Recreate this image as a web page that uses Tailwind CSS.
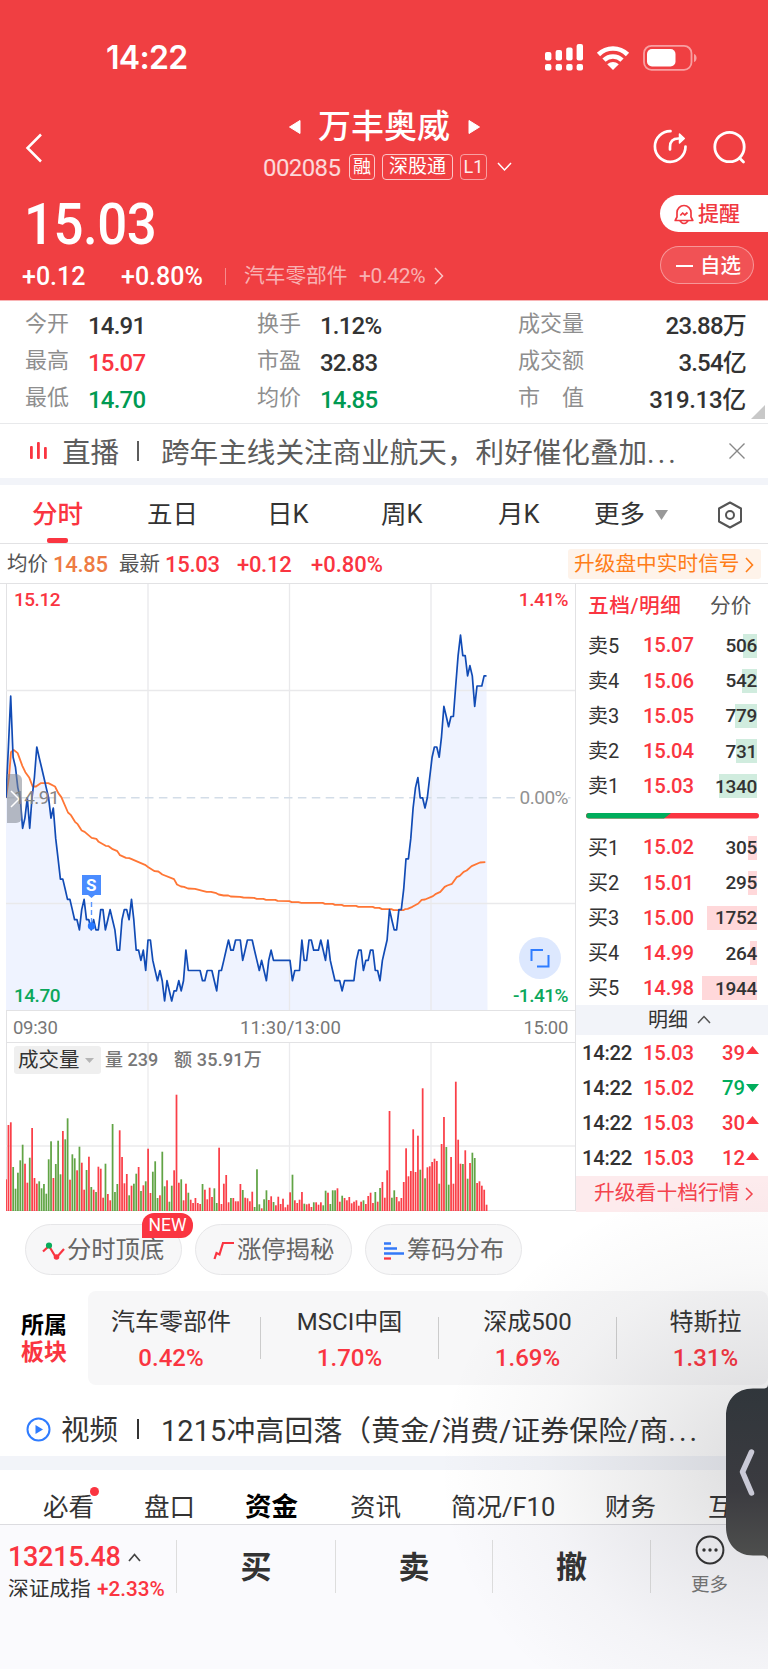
<!DOCTYPE html>
<html lang="zh-CN">
  <head>
    <meta charset="UTF-8" />
    <meta name="viewport" content="width=device-width, initial-scale=1.0" />
    <title>万丰奥威 002085</title>
    <script src="https://cdn.jsdelivr.net/npm/@tailwindcss/browser@4"></script>
  </head>
  <body
    class="relative h-[1669px] w-[768px] overflow-hidden bg-white font-['Roboto','Noto_Sans_CJK_SC',sans-serif] leading-none whitespace-nowrap text-[#333]"
  >
    <!-- header -->
    <header class="h-[301px] border-b border-[#f9b4b5] bg-[#f03f42] text-white">
      <!-- status bar -->
      <div class="flex h-[102px] items-center pt-[13px] pr-[70px] pl-[106px]">
        <span class="font-['Inter'] text-[32px] font-semibold tracking-[-0.700px]">14:22</span>
        <svg class="ml-auto" width="153" height="28" viewBox="545 43 153 28" fill="none">
          <g fill="#fff">
            <rect x="545" y="51" width="6.4" height="8.5" rx="2" />
            <rect x="555.6" y="49" width="6.4" height="10.5" rx="2" />
            <rect x="566.2" y="46.5" width="6.4" height="13" rx="2" />
            <rect x="576.6" y="43" width="6.4" height="16.5" rx="2" />
            <rect x="545" y="63" width="6.4" height="6.6" rx="2" />
            <rect x="555.6" y="63" width="6.4" height="6.6" rx="2" />
            <rect x="566.2" y="63" width="6.4" height="6.6" rx="2" />
            <rect x="576.6" y="63" width="6.4" height="6.6" rx="2" />
            <path d="M607.2 63.2q5.800-4.600 11.600 0L613 69z" />
            <rect x="647" y="48" width="28.500" height="17.500" rx="5" />
          </g>
          <path d="M598.500 53.500a20.500 20.500 0 0 1 29 0M604 59.200a12.800 12.800 0 0 1 18 0" stroke="#fff" stroke-width="4.600" />
          <rect x="644" y="44.800" width="47.500" height="24" rx="7.500" stroke="#fff" stroke-opacity=".5" stroke-width="1.800" />
          <path d="M694 53c3.400 1 3.400 7 0 8z" fill="#fff" fill-opacity=".5" />
        </svg>
      </div>

      <!-- stock title -->
      <div class="grid h-[84px] grid-cols-[263px_245px_182px_56px]">
        <svg class="mt-[30px] ml-[24px]" width="20" height="32" viewBox="0 0 20 32" fill="none" stroke="#fff" stroke-width="2.500">
          <path d="M17 2.500 3.500 16 17 29.500" />
        </svg>
        <div class="flex flex-col">
          <div class="flex h-[49px] items-center pl-[26px]">
            <svg width="12" height="16" viewBox="0 0 12 16" fill="#fff"><path d="M11 1.500v13L.500 8z" stroke="#fff" stroke-linejoin="round" /></svg>
            <span class="ml-[17px] text-[33px] font-medium">万丰奥威</span>
            <svg class="ml-[18px]" width="12" height="16" viewBox="0 0 12 16" fill="#fff"><path d="M1 1.500v13L11.500 8z" stroke="#fff" stroke-linejoin="round" /></svg>
          </div>
          <div class="flex h-[31px] items-center">
            <span class="w-[86px] shrink-0 pt-[2px] text-[24px] tracking-[-0.600px] text-white/80">002085</span>
            <span class="flex h-[26px] w-[26px] shrink-0 items-center justify-center rounded-[4px] border border-white/70 text-[18px]">融</span>
            <span class="ml-[7px] flex h-[26px] w-[71px] shrink-0 items-center justify-center rounded-[4px] border border-white/70 text-[19px]">深股通</span>
            <span class="ml-[7px] flex h-[26px] w-[27px] shrink-0 items-center justify-center rounded-[4px] border border-white/50 text-[18px] text-white/90">L1</span>
            <svg class="ml-[10px] shrink-0" width="15" height="10" viewBox="0 0 15 10" fill="none" stroke="#fff" stroke-width="1.500"><path d="m1 1 6.500 7L14 1" /></svg>
          </div>
        </div>
        <svg class="mt-[26px] ml-auto" width="38" height="38" viewBox="0 0 38 38" fill="none" stroke="#fff" stroke-width="2.700" stroke-linecap="round">
          <path d="M18.500 3.200A15.300 15.300 0 1 0 33.500 18.500" />
          <path d="M18 21.500v-2.500c0-6 3-8.500 8.500-8.500h4" />
          <path d="m27.500 6 4.800 4.500-4.800 4.500z" fill="#fff" stroke-width="1.500" stroke-linejoin="round" />
        </svg>
        <svg class="mt-[26px] ml-auto" width="38" height="38" viewBox="0 0 38 38" fill="none" stroke="#fff" stroke-width="2.800" stroke-linecap="round">
          <circle cx="21.500" cy="19" r="14.700" /><path d="m31.500 30 4 4" />
        </svg>
      </div>

      <!-- price -->
      <div class="flex justify-between">
        <div>
          <div class="flex h-[74px] items-center pt-[2px] pl-[24px]">
            <span class="origin-left scale-x-[.91] text-[58px] font-medium tracking-[-0.500px]">15.03</span>
          </div>
          <div class="grid h-[32px] grid-cols-[99px_104px_19px_115px_75px_20px] items-center pl-[22px] text-[25px]">
            <span class="font-medium">+0.12</span>
            <span class="font-medium">+0.80%</span>
            <i class="h-[17px] w-px bg-white/40"></i>
            <span class="text-[20.700px] text-white/60">汽车零部件</span>
            <span class="text-[21px] tracking-[-0.300px] text-white/60">+0.42%</span>
            <svg width="10" height="18" viewBox="0 0 10 18" fill="none" stroke="#fff" stroke-opacity=".7" stroke-width="1.500"><path d="m1 1 7.500 8L1 17" /></svg>
          </div>
        </div>
        <div class="flex w-[108px] flex-col gap-[14px] pt-[9px]">
          <button class="flex h-[37px] items-center rounded-l-full bg-white pt-px pl-[14px] text-[21px] font-medium text-[#f0383f]">
            <svg class="mr-[4px]" width="20" height="21" viewBox="0 0 20 21" fill="none" stroke="#f0383f" stroke-width="1.700" stroke-linejoin="round">
              <path d="M3 13V8.500a7 7 0 0 1 14 0V13l1.800 3.500H1.200zM6 17q4 5 8 0M6.300 11.500l2.400-2.500 2 2 2.800-2.500" />
            </svg>
            提醒
          </button>
          <button class="flex h-[38px] w-[94px] items-center rounded-full border border-white/40 bg-white/10 pt-[2px] pl-[15px] text-[20.500px] font-medium">
            <i class="mr-[7px] h-[2px] w-[17px] bg-white"></i>自选
          </button>
        </div>
      </div>
    </header>

    <!-- key figures -->
    <section class="relative grid h-[123px] grid-cols-[63px_169px_63px_198px_90px_138px] grid-rows-[37px_37px_37px] items-center border-b border-[#e8e9eb] pt-[6px] pl-[25px] text-[24px] font-medium tracking-[-0.800px]">
      <span class="-mt-[3px] text-[22px] font-normal tracking-normal text-[#8e8e8e]">今开</span><span>14.91</span>
      <span class="-mt-[3px] text-[22px] font-normal tracking-normal text-[#8e8e8e]">换手</span><span>1.12%</span>
      <span class="-mt-[3px] text-[22px] font-normal tracking-normal text-[#8e8e8e]">成交量</span><span class="text-right">23.88万</span>
      <span class="-mt-[3px] text-[22px] font-normal tracking-normal text-[#8e8e8e]">最高</span><span class="text-[#fa3541]">15.07</span>
      <span class="-mt-[3px] text-[22px] font-normal tracking-normal text-[#8e8e8e]">市盈</span><span>32.83</span>
      <span class="-mt-[3px] text-[22px] font-normal tracking-normal text-[#8e8e8e]">成交额</span><span class="text-right">3.54亿</span>
      <span class="-mt-[3px] text-[22px] font-normal tracking-normal text-[#8e8e8e]">最低</span><span class="text-[#009a52]">14.70</span>
      <span class="-mt-[3px] text-[22px] font-normal tracking-normal text-[#8e8e8e]">均价</span><span class="text-[#009a52]">14.85</span>
      <span class="-mt-[3px] flex w-[66px] justify-between text-[22px] font-normal tracking-normal text-[#8e8e8e]"><b class="font-normal">市</b><b class="font-normal">值</b></span><span class="text-right tracking-[-0.300px]">319.13亿</span>
      <svg class="absolute right-[3px] bottom-[4px]" width="14" height="14" viewBox="0 0 14 14"><path d="M14 0v14H0z" fill="#c8c8c8" /></svg>
    </section>

    <!-- live banner -->
    <section class="grid h-[54px] grid-cols-[33px_75px_24px_567px_20px] items-center pl-[29px] text-[28.600px] text-[#5c5c5c]">
      <svg width="20" height="18" viewBox="0 0 20 18" fill="#fa3541"><rect x="1" y="4" width="2.800" height="13" rx="1" /><rect x="8" y="0" width="2.800" height="17" rx="1" /><rect x="15" y="5" width="2.800" height="12" rx="1" /></svg>
      <span class="pt-[4px]">直播</span>
      <i class="h-[20px] w-[2px] bg-[#5c5c5c]"></i>
      <span class="pt-[4px]">跨年主线关注商业航天，利好催化叠加<b class="font-normal tracking-[3px]">...</b></span>
      <svg width="18" height="18" viewBox="0 0 18 18" stroke="#888" stroke-width="1.400"><path d="m1.500 1.500 15 15m0-15-15 15" /></svg>
    </section>
    <div class="h-[7px] bg-[#f2f4f9]"></div>

    <!-- period tabs -->
    <nav class="relative grid h-[59px] grid-cols-[115px_120px_114px_117px_96px_61px_62px_40px] items-center border-b border-[#e2e2e4] pt-[2px] pl-[32px] text-[25.500px]">
      <span class="font-medium text-[#fa3541]">分时</span>
      <span>五日</span>
      <span>日K</span>
      <span>周K</span>
      <span>月K</span>
      <span>更多</span>
      <svg width="13" height="10" viewBox="0 0 13 10" fill="#999"><path d="M0 0h13L6.500 10z" /></svg>
      <svg width="26" height="28" viewBox="0 0 26 28" fill="none" stroke="#555" stroke-width="2"><path d="M13 1.500 24 7.500v13l-11 6-11-6v-13z" stroke-linejoin="round" /><circle cx="13" cy="14" r="4" /></svg>
      <i class="absolute bottom-0 left-[47px] h-[5px] w-[21px] rounded-[2px] bg-[#fa3541]"></i>
    </nav>

    <!-- quote line -->
    <div class="grid h-[39px] grid-cols-[46px_66px_46px_72px_74px_257px_193px] items-center pt-[2px] pl-[7px] text-[22px] font-medium tracking-[-0.300px] text-[#fa3541]">
      <span class="text-[20.500px] font-normal tracking-normal text-[#555]">均价</span>
      <span class="text-[#ee7b43]">14.85</span>
      <span class="text-[20.500px] font-normal tracking-normal text-[#555]">最新</span>
      <span>15.03</span>
      <span>+0.12</span>
      <span class="tracking-normal">+0.80%</span>
      <button class="-mt-[2px] flex h-[30px] items-center rounded-[3px] bg-[#fef3ea] pt-[2px] pl-[6px] text-[20.700px] font-normal tracking-normal text-[#ff7d18]">
        升级盘中实时信号
        <svg class="ml-[5px] shrink-0" width="9" height="16" viewBox="0 0 9 16" fill="none" stroke="#ff7d18" stroke-width="1.600"><path d="m1 1 6.500 7L1 15" /></svg>
      </button>
    </div>

    <!-- charts and order book -->
    <main class="flex h-[628px] border-t border-[#e2e2e4]">
      <div class="ml-[6px] w-[570px] shrink-0 border-r border-[#e2e2e4]">
        <!-- minute chart -->
        <div class="relative h-[427px] border-b border-l border-[#e2e2e4] text-[19px] font-medium tracking-[-0.500px]">
          <svg class="-ml-px block" width="569" height="426" viewBox="0 0 569 426" fill="none">
            <path id="price-area" fill="#eff3ff" />
            <path d="M142 0v426M283.500 0v426M425 0v426M0 106.500h569M0 319.500h569" stroke="#e9e9eb" stroke-width="1.300" />
            <path d="M0 213.800h569" stroke="#d3dde8" stroke-width="1.500" stroke-dasharray="8.500 5.400" />
            <path d="M18 652 27 590 33 515 41 508 53 518 67 556 76 575 88 592 98 618 108 618 122 608 145 608 165 618 175 638 184 650 204 696 212 703 225 724 233 731 245 750 254 754 275 772 289 775 296 784 317 796 326 797 338 806 352 812 360 824 378 832 388 833 435 853 445 860 464 872 475 873 487 882 522 896 531 912 543 918 552 919 564 924 585 925 608 931 620 934 633 934 649 938 656 942 671 945 685 945 692 948 720 949 730 951 762 952 770 955 790 955 798 958 826 958 833 961 868 962 875 965 895 965 904 967 968 967 975 970 998 970 1005 973 1025 973 1032 976 1068 976 1075 979 1118 979 1125 982 1138 982 1146 986 1174 986 1181 989 1210 989 1215 986 1223 985 1237 979 1255 969 1265 958 1275 957 1299 947 1308 940 1321 934 1334 919 1342 915 1356 910 1370 890 1379 886 1391 874 1400 870 1415 857 1440 846 1456 845" transform="translate(-6 -3.500) scale(.33333)" stroke="#ff7635" stroke-width="5.400" stroke-linejoin="round" />
            <path id="price-line" stroke="#114bb5" stroke-width="1.700" stroke-linejoin="round" />
            <!-- sell marker -->
            <path d="M85.500 318v22" stroke="#5c98ff" stroke-width="1.400" stroke-dasharray="5 3" />
            <path d="M76 291h19v20h-6l-3.500 3-3.500-3h-6z" fill="#4a8cff" />
            <circle cx="85.500" cy="342" r="3.700" fill="#2878ff" />
          </svg>
          <span class="absolute top-[291px] left-[79px] text-[17px] leading-[20px] font-bold text-white">S</span>
          <span class="absolute top-[6px] left-[7px] text-[#fa3541]">15.12</span>
          <span class="absolute top-[6px] right-[7px] text-[#fa3541]">1.41%</span>
          <span class="absolute top-[190px] left-0 flex h-[49px] w-[15px] items-center rounded-r-[6px] bg-[#7f858f]/55">
            <svg class="ml-[3px]" width="11" height="18" viewBox="0 0 11 18" fill="none" stroke="#fff" stroke-width="1.500"><path d="m1 1 8 8-8 8" /></svg>
          </span>
          <span class="absolute top-[204px] left-[7px] font-normal text-[#858585]">14.91</span>
          <span class="absolute top-[204px] right-[7px] bg-white pl-1 font-normal text-[#929292]">0.00%</span>
          <span class="absolute bottom-[5px] left-[7px] text-[#0ba75b]">14.70</span>
          <span class="absolute right-[7px] bottom-[5px] text-[#0ba75b]">-1.41%</span>
          <span class="absolute right-[14px] bottom-[31px] flex size-[42px] items-center justify-center rounded-full bg-[#dde8fe]">
            <svg width="20" height="20" viewBox="0 0 20 20" fill="none" stroke="#2f7cff" stroke-width="2"><path d="M1.500 13V2H13M18.500 7v11.500H7" /></svg>
          </span>
        </div>
        <div class="relative flex h-[31px] items-center justify-between border-l border-[#e2e2e4] pt-[3px] pr-[7px] pl-[6px] text-[18.500px] text-[#777]">
          <span class="tracking-[-0.300px]">09:30</span>
          <span class="tracking-[0.100px]">11:30/13:00</span>
          <span class="tracking-[-0.300px]">15:00</span>
        </div>
        <!-- volume chart -->
        <div class="relative h-[169px] border-y border-l border-[#e2e2e4]">
          <svg class="-ml-px block" width="569" height="168" viewBox="0 0 569 168" fill="none">
            <path d="M142 0v168M283.500 0v168M425 0v168M0 103h569" stroke="#ebebed" stroke-width="1.300" />
            <g id="volume-bars"></g>
          </svg>
          <div class="absolute top-[3px] left-[7px] flex h-[28px] items-center text-[18px] font-medium text-[#777]">
            <span class="flex h-[28px] w-[87px] items-center rounded-[3px] bg-[#efefef] pl-[4px] text-[20.500px] font-normal text-[#333]">
              成交量
              <svg class="ml-[5px]" width="9" height="5" viewBox="0 0 9 5" fill="#b5b5b5"><path d="M0 0h9L4.500 5z" /></svg>
            </span>
            <span class="ml-[4px] w-[69px]">量 239</span>
            <span class="tracking-[0.200px]">额 35.91万</span>
          </div>
        </div>
      </div>

      <!-- order book -->
      <aside class="w-[192px] text-[20.300px] font-medium">
        <div class="flex h-[44px] items-center pt-px pl-[12px] text-[20.700px]">
          <span class="w-[122px] tracking-[0.500px] text-[#fa3541]">五档/明细</span>
          <span class="font-normal text-[#555]">分价</span>
        </div>
        <div id="asks"></div>
        <svg class="mt-[9px] mb-[11px] ml-[10px] block" width="173" height="6" viewBox="0 0 173 6">
          <rect width="173" height="5.500" rx="2.700" fill="#fa3541" /><path d="M3 0h82l-7 5.500H3a2.700 2.700 0 0 1 0-5.500" fill="#00ad5c" />
        </svg>
        <div id="bids"></div>
        <div class="-mt-px flex h-[30px] items-center justify-center bg-[#f2f4f9] pl-[15px] text-[20px] font-normal">
          明细
          <svg class="ml-[9px]" width="14" height="9" viewBox="0 0 14 9" fill="none" stroke="#555" stroke-width="1.500"><path d="m1 8 6-6.500L13 8" /></svg>
        </div>
        <div id="ticks"></div>
        <div class="flex h-[36px] items-center bg-[#fdebed] pl-[18px] text-[20.800px] font-normal text-[#f4434d]">
          升级看十档行情
          <svg class="ml-[5px]" width="9" height="14" viewBox="0 0 9 14" fill="none" stroke="#f4434d" stroke-width="1.500"><path d="m1 1 6 6-6 6" /></svg>
        </div>
      </aside>
    </main>

    <!-- tool pills -->
    <div class="relative flex h-[80px] gap-[13px] pt-[13px] pl-[25px] text-[24.300px] text-[#666]">
      <button class="flex h-[51px] w-[157px] items-center rounded-full border border-[#e6e6e8] bg-[#f7f7f8] pt-[2px] pl-[16px]">
        <svg class="mr-[2px]" width="23" height="18" viewBox="0 0 23 18" fill="none" stroke="#fa3541" stroke-width="2.200"><path d="M1 9.500 7 4l6 10 2 1 7-8" /><circle cx="7" cy="3.500" r="2" fill="#0aad5c" stroke="#0aad5c" /><circle cx="14.500" cy="15" r="1.700" fill="#fa3541" /></svg>
        分时顶底
      </button>
      <button class="flex h-[51px] w-[157px] items-center rounded-full border border-[#e6e6e8] bg-[#f7f7f8] pt-[2px] pl-[17px]">
        <svg class="mr-[2px]" width="22" height="20" viewBox="0 0 22 20" fill="none" stroke="#fa3541" stroke-width="2.200"><path d="m1.500 18 2-6 3 1.500L10 2h11" /></svg>
        涨停揭秘
      </button>
      <button class="flex h-[51px] w-[157px] items-center rounded-full border border-[#e6e6e8] bg-[#f7f7f8] pt-[2px] pl-[17px]">
        <svg class="mr-[2px]" width="22" height="18" viewBox="0 0 22 18" stroke="#3479f7" stroke-width="2.300"><path d="M1 1.500h7M1 6.500h13M1 11.500h20" /><path d="M1 16.500h7" stroke="#fa3541" /></svg>
        筹码分布
      </button>
      <span class="absolute top-[2px] left-[142px] flex h-[25px] w-[51px] items-center justify-center rounded-[12px] rounded-bl-none bg-[#fa3541] pt-px text-[17.500px] text-white">NEW</span>
    </div>

    <!-- sectors -->
    <section class="flex h-[94px]">
      <div class="flex w-[88px] shrink-0 flex-col justify-center gap-[4px] pt-px pl-[21px] text-[23px] font-bold text-black">
        <span>所属</span><span class="text-[#fa3541]">板块</span>
      </div>
      <div class="flex w-[680px] shrink-0 items-center overflow-hidden rounded-[8px] bg-[#f7f7f8] pt-[3px] text-center text-[24px]">
        <div class="flex w-[172px] shrink-0 flex-col gap-[12px] pr-[6px]"><span>汽车零部件</span><span class="font-medium text-[#fa3541]">0.42%</span></div>
        <i class="-mt-[3px] h-[42px] w-px shrink-0 bg-[#ccc]"></i>
        <div class="flex w-[177px] shrink-0 flex-col gap-[12px]"><span>MSCI中国</span><span class="font-medium text-[#fa3541]">1.70%</span></div>
        <i class="-mt-[3px] h-[42px] w-px shrink-0 bg-[#ccc]"></i>
        <div class="flex w-[177px] shrink-0 flex-col gap-[12px]"><span>深成500</span><span class="font-medium text-[#fa3541]">1.69%</span></div>
        <i class="-mt-[3px] h-[42px] w-px shrink-0 bg-[#ccc]"></i>
        <div class="flex w-[177px] shrink-0 flex-col gap-[12px]"><span>特斯拉</span><span class="font-medium text-[#fa3541]">1.31%</span></div>
      </div>
    </section>

    <!-- video -->
    <section class="grid h-[71px] grid-cols-[35px_76px_24px_560px] items-center pt-[17px] pl-[26px] text-[28.500px]">
      <svg width="25" height="25" viewBox="0 0 25 25"><circle cx="12.500" cy="12.500" r="11" fill="none" stroke="#2f7cff" stroke-width="2" /><path d="M9.500 8v9l7.500-4.500z" fill="#2f7cff" /></svg>
      <span class="pt-[4px]">视频</span>
      <i class="h-[20px] w-[2px] bg-[#333]"></i>
      <span class="pt-[4px] text-[28.800px] tracking-[0.180px]">1215冲高回落（黄金/消费/证券保险/商<b class="font-normal tracking-[3px]">...</b></span>
    </section>
    <div class="h-[14px] bg-[#f2f4f9]"></div>

    <!-- content tabs -->
    <nav class="relative grid h-[55px] grid-cols-[101px_101px_105px_101px_154px_103px_50px] items-center border-b border-[#dcdce0] pt-[21px] pl-[43px] text-[25.500px]">
      <span>必看</span>
      <span>盘口</span>
      <span class="text-[26.500px] font-bold text-black">资金</span>
      <span>资讯</span>
      <span>简况/F10</span>
      <span>财务</span>
      <span>互</span>
      <i class="absolute top-[17px] left-[90px] size-[9px] rounded-full bg-[#fa3541]"></i>
    </nav>

    <!-- trade bar -->
    <footer class="flex h-[144px] bg-[#fafafd] pt-[15px]">
      <div class="w-[176px] pt-px pl-[8px]">
        <div class="flex h-[32px] items-center text-[27px] font-medium tracking-[-0.300px] text-[#fa3541]">
          13215.48
          <svg class="ml-[7px]" width="13" height="9" viewBox="0 0 13 9" fill="none" stroke="#444" stroke-width="1.700"><path d="m1 8 5.500-6.500L12 8" /></svg>
        </div>
        <div class="flex h-[32px] items-center text-[20.700px]">
          <span class="w-[89px]">深证成指</span><span class="font-medium text-[#fa3541]">+2.33%</span>
        </div>
      </div>
      <button class="h-[53px] w-[159px] border-l border-[#ddd] pt-[2px] text-[31px] font-bold">买</button>
      <button class="h-[53px] w-[157px] border-l border-[#ddd] pt-[2px] text-[31px] font-bold">卖</button>
      <button class="h-[53px] w-[158px] border-l border-[#ddd] pt-[2px] text-[31px] font-bold">撤</button>
      <div class="flex h-[53px] w-[118px] flex-col items-center gap-[11px] border-l border-[#ddd] text-[18.500px] text-[#777]">
        <svg class="-mt-[5px] shrink-0" width="30" height="30" viewBox="0 0 30 30"><circle cx="15" cy="15" r="13.400" fill="none" stroke="#333" stroke-width="2" /><g fill="#333"><circle cx="9" cy="15" r="1.700" /><circle cx="15" cy="15" r="1.700" /><circle cx="21" cy="15" r="1.700" /></g></svg>
        更多
      </div>
    </footer>

    <!-- side drawer handle with its soft shadow -->
    <div class="pointer-events-none absolute right-0 bottom-0 h-[520px] w-[360px] bg-[radial-gradient(ellipse_330px_290px_at_100%_61%,rgba(40,40,48,0.16),rgba(40,40,48,0.09)_35%,rgba(40,40,48,0.03)_68%,transparent)]"></div>
    <svg class="absolute top-[1374px] right-0" width="42" height="196" viewBox="0 0 42 196" fill="none">
      <defs>
        <linearGradient id="handle" x1="0" y1="0" x2="0" y2="1"><stop stop-color="#30363b" /><stop offset=".6" stop-color="#3b3b40" /><stop offset="1" stop-color="#4f504e" /></linearGradient>
      </defs>
      <path d="M42 10c0 3-1 4.500-5 4.500H27C10 14.500 0 26 0 42v111c0 16 10 28.500 27 28.500h9c4 0 6 1.500 6 5z" fill="url(#handle)" />
      <path d="M25.500 78 16.500 98 25.500 119" stroke="#c9c9d6" stroke-width="5.500" stroke-linecap="round" stroke-linejoin="round" />
    </svg>

    <script>
      // minute prices, in cents above or below the previous close 14.91
      const prices = [
        0, 5, 10, 4, 3, 1, 0, -3, -2, 0, -3, 0, 2, 5, 4, 3, 2, 1, 0, -2,
        -1, -4, -6, -8, -8, -9, -10, -10, -11, -12, -12, -13, -11, -10, -12, -12, -13, -12, -13, -13,
        -11, -11, -13, -12, -11, -12, -13, -15, -15, -12, -11, -11, -12, -10, -12, -15, -15, -16, -15, -17,
        -14, -14, -16, -17, -18, -17, -18, -20, -18, -19, -20, -19, -19, -18, -19, -18, -15, -17, -17, -17,
        -17, -17, -17, -18, -18, -17, -17, -17, -18, -19, -17, -17, -16, -15, -14, -15, -15, -14, -14, -14,
        -16, -15, -14, -14, -14, -15, -16, -17, -16, -17, -18, -16, -15, -16, -16, -16, -16, -16, -16, -16,
        -16, -18, -17, -17, -17, -14, -16, -16, -14, -14, -15, -15, -15, -14, -15, -16, -14, -16, -17, -18,
        -18, -18, -19, -18, -18, -18, -18, -18, -16, -15, -15, -17, -16, -16, -15, -15, -17, -17, -18, -16,
        -15, -14, -11, -12, -13, -13, -11, -11, -9, -6, -6, -4, -1, 1, 2, 0, 0, -1, 0, 2,
        4, 5, 5, 4, 6, 9, 8, 7, 8, 8, 11, 14, 16, 14, 14, 12, 13, 12, 9, 11,
        11, 11, 12, 12,
      ];

      // minute volumes, r = up, g = down
      const volumes =
        "95r 258r 266r 132g 67g 115g 152g 199g 142r 85r 160g 249r 99r 82r 89g 68g 81g 52g 155g 209g " +
        "99r 141g 211g 110g 240r 215g 278g 94r 170g 158g 122r 193g 145r 64r 123g 163r 72g 64r 57g 133r " +
        "127r 40r 142g 51r 32r 261g 57g 81g 242r 162r 83r 111r 47g 76r 82g 112g 132r 60g 77r 89g " +
        "187r 54r 118g 149g 39g 47r 178g 74g 92r 28g 76g 122r 349r 85r 95g 32r 82r 55g 34r 24r " +
        "39r 24r 21r 81g 64r 35r 70r 42r 68g 24g 190r 21r 82r 108r 26r 39g 39r 29r 29r 81r " +
        "63g 40r 38r 29r 58r 12g 125g 20g 8r 35g 62g 33r 44r 27g 17r 43r 21r 37r 11r 19r " +
        "56r 109g 32r 24r 34r 57r 22g 20r 22r 12r 26g 26r 19r 26r 17g 61g 55r 21g 62g 62g " +
        "68r 28r 46g 39r 32r 42r 23r 28r 32r 16r 28r 32g 21r 45r 55r 24r 57g 28r 69g 87r " +
        "40r 122r 300r 40g 62g 42r 29r 39r 87r 188r 104r 120r 245r 117r 226r 124g 368r 98g 131r 134r " +
        "147r 157r 150r 82g 201r 282r 192g 79g 162r 82r 388r 214r 142r 141g 182r 97g 144r 175g 159g 84r " +
        "89r 76r 64r 19r";

      const step = 2.367;
      const line = prices
        .map((p, i) => `${(i * step).toFixed(1)} ${(213.8 - p * 10.16).toFixed(1)}`)
        .join("L");
      document.getElementById("price-line").setAttribute("d", `M${line}`);
      document
        .getElementById("price-area")
        .setAttribute("d", `M0 426L${line}L${(prices.length - 1) * step + 1} 426z`);

      document.getElementById("volume-bars").innerHTML = volumes
        .split(" ")
        .map((v, i) => {
          const h = parseInt(v) / 3;
          const color = v.endsWith("r") ? "#fa3f48" : "#61a445";
          return `<rect x="${(i * step - 0.8).toFixed(2)}" y="${(168 - h).toFixed(1)}" width="1.75" height="${h.toFixed(1)}" fill="${color}"/>`;
        })
        .join("");

      // order book rows: name, price, lots, bar width
      const asks = [
        ["卖5", "15.07", 506, 14],
        ["卖4", "15.06", 542, 15],
        ["卖3", "15.05", 779, 22],
        ["卖2", "15.04", 731, 21],
        ["卖1", "15.03", 1340, 38],
      ];
      const bids = [
        ["买1", "15.02", 305, 9],
        ["买2", "15.01", 295, 9],
        ["买3", "15.00", 1752, 50],
        ["买4", "14.99", 264, 7],
        ["买5", "14.98", 1944, 55],
      ];
      const bookRow = (bar) => ([name, price, lots, width]) => `
        <div class="grid h-[35.2px] grid-cols-[55px_60px_54px] items-center pl-[12px]">
          <span class="text-[20px] font-normal">${name}</span>
          <span class="tracking-[-0.2px] text-[#fa3541]">${price}</span>
          <span class="relative flex h-[24px] items-center justify-end text-[19px]">
            <i class="absolute right-0 h-[24px] ${bar}" style="width:${width}px"></i>
            <b class="relative font-medium tracking-[-0.3px]">${lots}</b>
          </span>
        </div>`;
      document.getElementById("asks").innerHTML = asks.map(bookRow("bg-[#d0ecde]")).join("");
      document.getElementById("bids").innerHTML = bids.map(bookRow("bg-[#ffd8da]")).join("");

      const ticks = [
        ["15.03", 39, true],
        ["15.02", 79, false],
        ["15.03", 30, true],
        ["15.03", 12, true],
      ];
      document.getElementById("ticks").innerHTML = ticks
        .map(
          ([price, lots, up]) => `
        <div class="grid h-[35.2px] grid-cols-[61px_60px_42px_14px] items-center pt-px pl-[6px]">
          <span class="tracking-[-0.3px]">14:22</span>
          <span class="tracking-[-0.2px] text-[#fa3541]">${price}</span>
          <span class="text-right ${up ? "text-[#fa3541]" : "text-[#00ad5c]"}">${lots}</span>
          <svg class="ml-px ${up ? "-mt-[6px]" : ""}" width="13" height="8" viewBox="0 0 13 8"><path d="${up ? "M0 8h13L6.5 0z" : "M0 0h13L6.500 8z"}" fill="${up ? "#fa3541" : "#00ad5c"}"/></svg>
        </div>`
        )
        .join("");
    </script>
  </body>
</html>
